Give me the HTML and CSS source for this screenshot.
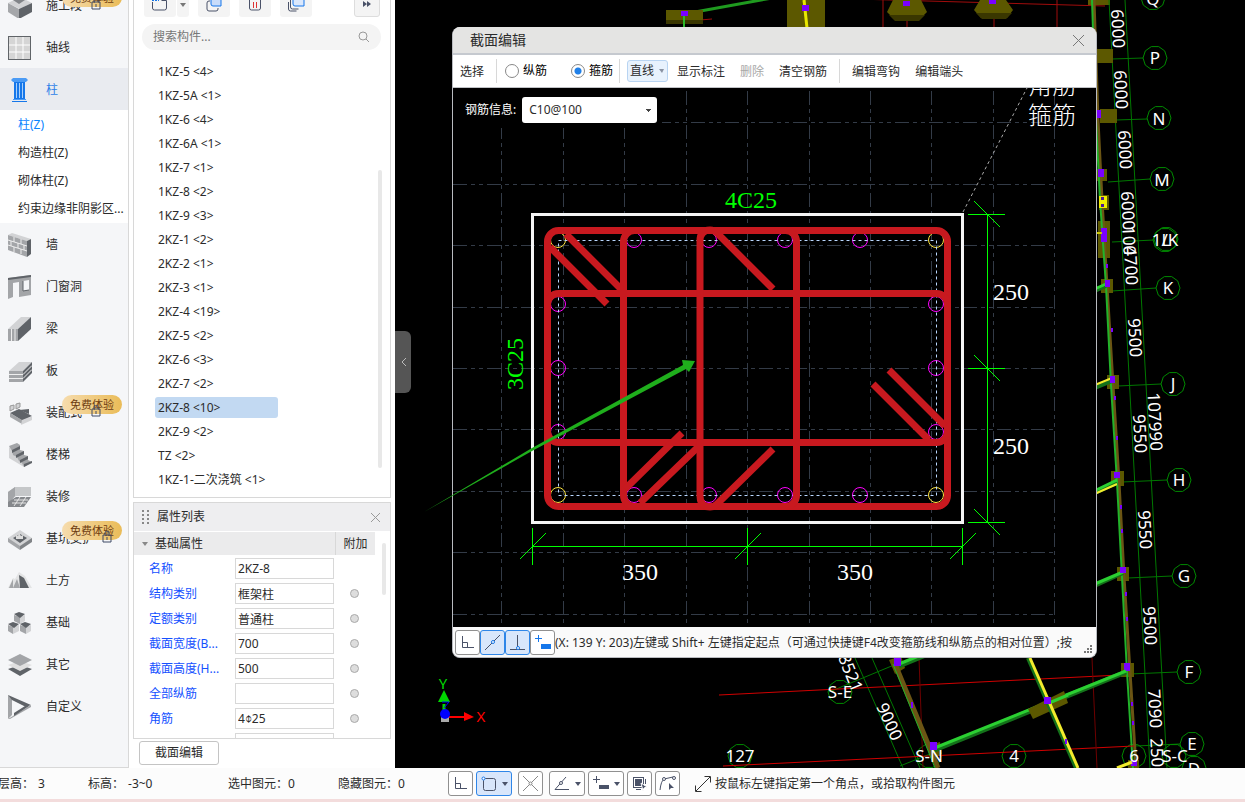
FILE: index.html
```html
<!DOCTYPE html>
<html lang="zh-CN">
<head>
    <meta charset="UTF-8">
    <meta name="viewport" content="width=device-width, initial-scale=1.0">
    <title>截面编辑</title>
    <link rel="stylesheet" href="styles.css">
</head>
<body>
    <div class="workspace">
        <nav class="modules">
            <div class="module-list">
                <button class="module">
                    <svg class="module-icon" viewBox="0 0 24 24"><path d="M0 9l12-6 12 6-12 6z" fill="#d2d3d5"/><path d="M0 9l11 6v10L0 18z" fill="#a5a7aa"/><path d="M24 9l-13 6v10l13-7z" fill="#5f6368"/><path d="M5 6l6 4 6-4V2H5z" fill="#818488"/></svg>
                    <span>施工段</span>
                    <span class="trial">免费体验</span>
                    <svg class="lock" viewBox="0 0 10 12"><path d="M3 4V2a2 2 0 0 1 4 0v2M1 4h8v7H1zM5 6v3" fill="none" stroke="#3f4a66"/></svg>
                </button>
                <button class="module">
                    <svg class="module-icon" viewBox="0 0 24 24"><path d="M0 0h23v24H0z" fill="#606468"/><path d="M1 1h21v22H1z" fill="#d5d5d5"/><path d="M8 1v22M15 1v22M1 9h21M1 16h21" stroke="#fff"/></svg>
                    <span>轴线</span>
                </button>
                <button class="module active">
                    <svg class="module-icon" viewBox="0 0 24 24"><path d="M5 0h13l2 2-2 2H5L3 2z" fill="#4b9bf5"/><path d="M6 4h11v17H6z" fill="#1677ea"/><path d="M8.500 5v15M11.500 5v15M14.500 5v15" stroke="#a8d0fb"/><path d="M5 21h13v1H5z" fill="#4b9bf5"/><path d="M4 23h15v1H4z" fill="#1677ea"/></svg>
                    <span>柱</span>
                </button>
                <ul class="submenu">
                    <li><a class="current" href="#">柱(Z)</a></li>
                    <li><a href="#">构造柱(Z)</a></li>
                    <li><a href="#">砌体柱(Z)</a></li>
                    <li><a href="#">约束边缘非阴影区...</a></li>
                </ul>
                <button class="module">
                    <svg class="module-icon" viewBox="0 0 24 24"><path d="M0 2l4-2 19 6-4 2z" fill="#d2d3d5"/><path d="M0 2l19 6v16L0 17z" fill="#a3a5a8"/><path d="M19 8l4-2v15l-4 3z" fill="#5f6368"/><path d="M0 7l19 6M0 12l19 6M6 4v5M13 6v5M3 8v5M10 10v5M16 12v5M6 14v5M13 16v5" stroke="#eee"/></svg>
                    <span>墙</span>
                </button>
                <button class="module">
                    <svg class="module-icon" viewBox="0 0 24 24"><path d="M0 3l23-3v20l-12 2V7l-6 1v14l-5 2z" fill="#a3a5a8"/><path d="M0 3l23-3v2L0 5z" fill="#5f6368"/><path d="M15 6l6-1v10l-6 1z" fill="#f5f6f8"/><path d="M15 6v10l6-1" fill="none" stroke="#5f6368"/></svg>
                    <span>门窗洞</span>
                </button>
                <button class="module">
                    <svg class="module-icon" viewBox="0 0 24 24"><path d="M0 12L13 0h10L10 12z" fill="#d2d3d5"/><path d="M0 12h10v12H0z" fill="#a3a5a8"/><path d="M10 12L23 0v12L10 24z" fill="#5f6368"/><path d="M3.500 12v12M7 12v12" stroke="#eee"/></svg>
                    <span>梁</span>
                </button>
                <button class="module">
                    <svg class="module-icon" viewBox="0 0 24 24"><path d="M1 12L11 3h13L15 12z" fill="#d2d3d5"/><path d="M1 12h14v11H1z" fill="#a3a5a8"/><path d="M15 12l9-9v11l-9 9z" fill="#5f6368"/><path d="M1 15.500h14l9-9M1 19.500h14l9-9" fill="none" stroke="#eee"/></svg>
                    <span>板</span>
                </button>
                <button class="module">
                    <svg class="module-icon" viewBox="0 0 24 24"><path d="M2 12l9-4 13 7-9 5z" fill="#5f6368"/><path d="M2 12v4l12 7v-4z" fill="#a3a5a8"/><path d="M14 19l10-4v4l-11 5z" fill="#d2d3d5"/><path d="M2 5l4-1v4l-4 2zM8 3l4-1v4l-4 2z" fill="#d2d3d5" stroke="#999"/><path d="M11 9l10-1v5z" fill="#5f6368"/></svg>
                    <span>装配式</span>
                    <span class="trial">免费体验</span>
                    <svg class="lock" viewBox="0 0 10 12"><path d="M3 4V2a2 2 0 0 1 4 0v2M1 4h8v7H1zM5 6v3" fill="none" stroke="#3f4a66"/></svg>
                </button>
                <button class="module">
                    <svg class="module-icon" viewBox="0 0 24 24"><path d="M1 4v11l15 9V14z" fill="#d2d3d5"/><path d="M1 3l8-3 3 2v5l4 1v4l4 1v4l4 2-8 5-2-4-3-2-2-4-4-2-1-4z" fill="#a3a5a8"/><path d="M4 7l8-4v3l-8 4zM8 12l8-4v3l-8 4zM12 17l8-4v3l-8 4zM16 21l8-3v2l-8 4z" fill="#5f6368"/></svg>
                    <span>楼梯</span>
                </button>
                <button class="module">
                    <svg class="module-icon" viewBox="0 0 24 24"><path d="M0 7l7-5h16v9H8l-8 5z" fill="#c5c7c9"/><path d="M0 7l7-5v9l-7 9z" fill="#a3a5a8"/><path d="M0 17l8-5h15l-7 10H0z" fill="#85888c"/><path d="M6 15h14M4 18h14M12 12l-6 9M18 12l-6 9" stroke="#e6e6e6"/></svg>
                    <span>装修</span>
                </button>
                <button class="module">
                    <svg class="module-icon" viewBox="0 0 24 24"><path d="M0 11l12-8 12 8v2l-12 9L0 13z" fill="#d2d3d5"/><path d="M0 11l12 8v4L0 15z" fill="#a3a5a8"/><path d="M24 11l-12 8v4l12-8z" fill="#808387"/><path d="M5 11l7-4 7 4-7 5z" fill="#5f6368"/><path d="M8 12V8l2 1 1-3 2 3 2-1v4z" fill="#ddd"/></svg>
                    <span>基坑支护</span>
                    <span class="trial">免费体验</span>
                    <svg class="lock lock-far" viewBox="0 0 10 12"><path d="M3 4V2a2 2 0 0 1 4 0v2M1 4h8v7H1zM5 6v3" fill="none" stroke="#3f4a66"/></svg>
                </button>
                <button class="module">
                    <svg class="module-icon" viewBox="0 0 24 24"><path d="M0 19l5-10 2 1 4-7 6 4 7 12z" fill="#e3e4e5"/><path d="M5 19l4-9 3 9zM1 19l4-9v9z" fill="#a3a5a8"/><path d="M11 6l5 3 5 10h-9z" fill="#5f6368"/></svg>
                    <span>土方</span>
                </button>
                <button class="module">
                    <svg class="module-icon" viewBox="0 0 24 24"><path d="M6 4v6l6 3V6zM0 14v6l5 3v-7zM12 14v6l6 3v-7z" fill="#a3a5a8"/><path d="M12 6v7l5-3V4zM5 16v7l6-3v-6zM18 16v7l5-3v-6z" fill="#d2d3d5"/><path d="M6 3l5-2 6 2-5 4zM0 13l5-2 6 2-5 4zM12 13l5-2 6 2-5 4z" fill="#5f6368"/></svg>
                    <span>基础</span>
                </button>
                <button class="module">
                    <svg class="module-icon" viewBox="0 0 24 24"><path d="M0 16l12-4 12 4-12 7z" fill="#5f6368"/><path d="M0 12l12-4 12 4-12 6z" fill="#e0e0e0"/><path d="M0 7l12-6 12 6-12 6z" fill="#a3a5a8"/></svg>
                    <span>其它</span>
                </button>
                <button class="module">
                    <svg class="module-icon" viewBox="0 0 24 24"><path d="M0 0l4 3v17l-4 4z" fill="#a3a5a8"/><path d="M0 0l23 10-5 2L4 5z" fill="#5f6368"/><path d="M0 24l23-14v2L2 24z" fill="#a3a5a8"/><path d="M6 18l11-7 4 0-15 10z" fill="#5f6368"/></svg>
                    <span>自定义</span>
                </button>
            </div>
        </nav>

        <aside class="side">
            <section class="components">
                <div class="component-tools">
                    <button class="tool-new" aria-label="新建"><svg width="20" height="16" viewBox="0 0 20 16"><path d="M2.500 5v6a2 2 0 0 0 2 2h10a2 2 0 0 0 2-2V3.500h-5" fill="none" stroke="#4a5268"/><path d="M2 3h7" stroke="#1677ea" stroke-dasharray="2 1" stroke-width="2"/></svg></button>
                    <button class="tool-arrow" aria-label="更多新建"><svg width="6" height="4"><path d="M0 0h6L3 4z" fill="#777"/></svg></button>
                    <button class="tool" aria-label="复制"><svg width="20" height="16" viewBox="0 0 20 16"><path d="M6 4H5a2 2 0 0 0-2 2v6a2 2 0 0 0 2 2h7a2 2 0 0 0 2-2v-1" fill="none" stroke="#4a5268"/><path d="M7 0h10v9H9a2 2 0 0 1-2-2z" fill="#c8dcfa" stroke="#1677ea"/></svg></button>
                    <button class="tool" aria-label="删除"><svg width="20" height="16" viewBox="0 0 20 16"><path d="M4.500 0v11a2 2 0 0 0 2 2h7a2 2 0 0 0 2-2V0" fill="none" stroke="#4a5268"/><path d="M8.500 5v6M11.500 5v6" stroke="#d33"/></svg></button>
                    <button class="tool" aria-label="层间复制"><svg width="20" height="16" viewBox="0 0 20 16"><path d="M2.500 5v7a2 2 0 0 0 2 2h6M4.500 3v7a2 2 0 0 0 2 2h6" fill="none" stroke="#4a5268"/><path d="M7 0h11v9H9a2 2 0 0 1-2-2z" fill="#dbe8fc" stroke="#1677ea"/></svg></button>
                    <button class="tool-more" aria-label="展开"><svg width="8" height="6"><path d="M0 0l4 3-4 3zM4 0l4 3-4 3z" fill="#4a5268"/></svg></button>
                </div>
                <label class="search">
                    <input type="text" placeholder="搜索构件..." aria-label="搜索构件">
                    <svg width="12" height="12" viewBox="0 0 12 12"><circle cx="5" cy="5" r="4" fill="none" stroke="#999"/><path d="M8 8l3 3" stroke="#999"/></svg>
                </label>
                <ul class="component-list">
                    <li>1KZ-5 &lt;4&gt;</li>
                    <li>1KZ-5A &lt;1&gt;</li>
                    <li>1KZ-6 &lt;4&gt;</li>
                    <li>1KZ-6A &lt;1&gt;</li>
                    <li>1KZ-7 &lt;1&gt;</li>
                    <li>1KZ-8 &lt;2&gt;</li>
                    <li>1KZ-9 &lt;3&gt;</li>
                    <li>2KZ-1 &lt;2&gt;</li>
                    <li>2KZ-2 &lt;1&gt;</li>
                    <li>2KZ-3 &lt;1&gt;</li>
                    <li>2KZ-4 &lt;19&gt;</li>
                    <li>2KZ-5 &lt;2&gt;</li>
                    <li>2KZ-6 &lt;3&gt;</li>
                    <li>2KZ-7 &lt;2&gt;</li>
                    <li class="selected"><span>2KZ-8 &lt;10&gt;</span></li>
                    <li>2KZ-9 &lt;2&gt;</li>
                    <li>TZ &lt;2&gt;</li>
                    <li>1KZ-1-二次浇筑 &lt;1&gt;</li>
                </ul>
                <div class="list-scroll"></div>
            </section>

            <section class="properties">
                <header class="properties-title">
                    <svg width="7" height="15" viewBox="0 0 7 15"><path d="M1 0v15M6 0v15" stroke="#888" stroke-width="2" stroke-dasharray="2 2"/></svg>
                    <h2>属性列表</h2>
                    <button class="close" aria-label="关闭"><svg width="9" height="9"><path d="M0 0l9 9M9 0L0 9" stroke="#999"/></svg></button>
                </header>
                <div class="properties-head">
                    <span class="group"><svg width="6" height="4"><path d="M0 0h6L3 4z" fill="#888"/></svg>基础属性</span>
                    <span class="extra">附加</span>
                </div>
                <div class="prop"><label for="pName">名称</label><input type="text" id="pName" value="2KZ-8"></div>
                <div class="prop"><label for="pType">结构类别</label><input type="text" id="pType" value="框架柱"><input type="checkbox" aria-label="附加 结构类别"></div>
                <div class="prop"><label for="pQuota">定额类别</label><input type="text" id="pQuota" value="普通柱"><input type="checkbox" aria-label="附加 定额类别"></div>
                <div class="prop"><label for="pWidth">截面宽度(B...</label><input type="text" id="pWidth" value="700"><input type="checkbox" aria-label="附加 截面宽度"></div>
                <div class="prop"><label for="pHeight">截面高度(H...</label><input type="text" id="pHeight" value="500"><input type="checkbox" aria-label="附加 截面高度"></div>
                <div class="prop"><label for="pAll">全部纵筋</label><input type="text" id="pAll" value=""><input type="checkbox" aria-label="附加 全部纵筋"></div>
                <div class="prop"><label for="pCorner">角筋</label><input type="text" id="pCorner" value="4⌽25"><input type="checkbox" aria-label="附加 角筋"></div>
                <div class="prop"><label></label><input type="text" aria-label="B边一侧中部筋"></div>
                <div class="props-scroll"></div>
            </section>
            <button class="section-edit">截面编辑</button>
        </aside>

        <main class="viewport">
            <svg class="scene" viewBox="395 0 850 768" preserveAspectRatio="xMinYMin slice">
                <defs>
                    <polygon id="ring" points="12,0 9.700,7.100 3.700,11.400 -3.700,11.400 -9.700,7.100 -12,0 -9.700,-7.100 -3.700,-11.400 3.700,-11.400 9.700,-7.100"/>
                </defs>
                <!-- top row of footings -->
                <g stroke="#a00c0c">
                    <path d="M820 -2L1105 6M883 0v30M907 0v30M994 0v30M1057 0v30M700 20l12-1"/>
                </g>
                <path d="M684 14l110-20" stroke="#1f9a1f" stroke-width="3"/>
                <path d="M666 10h37v14h-37zM787 0h38v28h-38zM893 0h28l6 12-8 8h-24l-8-8zM980 0h26l7 10-6 8h-26l-7-8zM1088 0h22v5h-22z" fill="#5c5800"/>
                <path d="M666 20h37v4h-37zM889 15h36l-6 6h-24zM976 13h36l-6 6h-24z" fill="#3a3700"/>
                <path d="M684 16v12" stroke="#2ab82a" stroke-width="2"/>
                <path d="M804 0l3 28" stroke="#e8e800" stroke-width="3"/>
                <path d="M681 11h7v5h-7zM802 5h7v6h-7zM903 1h7v5h-7zM989 0h7v4h-7z" fill="#7a00ff"/>

                <!-- axis lines -->
                <g class="axis">
                    <path d="M1109 0L1150 768M1125 0L1167 768M855 658L903 768M872 658L920 768"/>
                    <path d="M1112 59l31-1M1116 120l31-1M1108 182l42-3M1112 242l42-2M1112 291l44-3M1118 386l43-2M1122 482l45-2M1128 578l44-2M1130 674l47-2M1135 746l45-2M829 692l65-27M900 766l30-12"/>
                </g>
                <g class="axis-ring">
                    <use href="#ring" x="1153" y="-2"/><use href="#ring" x="1155" y="58"/><use href="#ring" x="1159" y="118"/><use href="#ring" x="1162" y="179"/><use href="#ring" x="1165" y="240"/><use href="#ring" x="1166" y="239"/><use href="#ring" x="1168" y="288"/><use href="#ring" x="1173" y="384"/><use href="#ring" x="1179" y="480"/><use href="#ring" x="1184" y="576"/><use href="#ring" x="1189" y="672"/><use href="#ring" x="1192" y="744"/><use href="#ring" x="1194" y="768"/><use href="#ring" x="1174" y="756"/><use href="#ring" x="1134" y="756"/><use href="#ring" x="1014" y="756"/><use href="#ring" x="929" y="756"/><use href="#ring" x="840" y="692"/><use href="#ring" x="740" y="756"/>
                </g>

                <!-- columns on the right -->
                <path d="M1097 49h16v14h-16zM1100 109h17v14h-17zM1097 169h10v12h-10zM1099 195h10v15h-10zM1098 221h12v37h-12zM1101 279h12v14h-12zM1107 375h12v14h-12zM1111 471h13v15h-13zM1117 567h12v14h-12zM1121 663h13v14h-13zM1128 760h11v8h-11z" fill="#5c5800"/>
                <path d="M1094 0L1098 120 1102 200 1107 286 1113 385 1119 482 1124 577 1130 672 1136 768" fill="none" stroke="#6b5514" stroke-width="3"/>
                <path d="M1092 0L1096 120 1100 200 1106 286 1111 385 1117 482 1122 577 1127 672 1133 768" fill="none" stroke="#22b32a" stroke-width="2"/>
                <g fill="none">
                    <path d="M1090 293l16-7M1090 390l22-9M1090 495l27-12M1090 588l33-15" stroke="#14711a" stroke-width="4"/>
                    <path d="M1090 291l16-7M1090 493l27-13M1090 586l33-14" stroke="#2bd032" stroke-width="3"/>
                    <path d="M1090 387l22-9M1090 496l27-12" stroke="#f2ec2d" stroke-width="2"/>
                </g>
                <path d="M1097 110h4v8h-4zM1098 169h6v8h-6zM1101 228h6v14h-6zM1105 280h5v7h-5zM1110 376h5v7h-5zM1114 472h6v6h-6zM1120 567h6v6h-6zM1124 663h6v8h-6zM1131 760h6v6h-6zM1106 264h2v4h-2zM1111 328h2v4h-2zM1114 396h2v4h-2zM1116 436h2v4h-2zM1120 505h2v4h-2zM1121 529h2v4h-2zM1125 592h2v4h-2zM1126 617h2v4h-2zM1131 702h2v4h-2zM1132 721h2v4h-2z" fill="#7a00ff"/>
                <path d="M1099 196h8v12h-8z" fill="#f0ee00"/>
                <path d="M1101 197h3v3h-3zM1101 204h3v3h-3z" fill="#4d1a9a"/>
                <path d="M1097 233h5" stroke="#c9c400" stroke-width="2"/>

                <!-- lower wing -->
                <path d="M719 695L1120 675M723 766L1134 746" stroke="#d00000"/>
                <path d="M919 658l4 110M1092 658l5 110" stroke="#6e0000"/>
                <path d="M889 660l12-4 4 12-10 6zM926 746l14-4 2 12-10 5z" fill="#5c5800"/>
                <path d="M895 664L938 768" stroke="#6b5514" stroke-width="5"/>
                <path d="M893 664L935 768" stroke="#22b32a"/>
                <path d="M899 666l34-14M932 751L1126 672" stroke="#14711a" stroke-width="5"/>
                <path d="M899 664l34-14M932 749L1126 671" stroke="#2bd032" stroke-width="3"/>
                <path d="M1028 709l36-18 4 12-35 16z" fill="#5c5800"/>
                <path d="M1049 703l19-8" stroke="#2bd032" stroke-width="3"/>
                <path d="M1028 658L1076 768" stroke="#14711a" stroke-width="4"/>
                <path d="M1030 658L1078 768" stroke="#f2ec2d" stroke-width="3"/>
                <path d="M1117 768l15-6" stroke="#f2ec2d" stroke-width="3"/>
                <path d="M894 658h7v8h-7zM930 742h7v8h-7zM1044 697h7v7h-7zM911 702h2v6h-2zM1065 739h2v5h-2z" fill="#7a00ff"/>

                <g class="axis-name">
                    <text x="1153" y="5">Q</text><text x="1155" y="64">P</text><text x="1159" y="125">N</text><text x="1162" y="186">M</text><text x="1165" y="246">1/K</text><text x="1166" y="246">L</text><text x="1168" y="294">K</text><text x="1173" y="390">J</text><text x="1179" y="486">H</text><text x="1184" y="582">G</text><text x="1189" y="678">F</text><text x="1192" y="750">E</text><text x="1194" y="775">D</text><text x="1175" y="762">S-C</text><text x="1134" y="762">6</text><text x="1014" y="762">4</text><text x="929" y="762">S-N</text><text x="840" y="698">S-E</text><text x="740" y="762">127</text>
                </g>
                <g class="axis-name">
                    <text transform="translate(1112 29) rotate(87)">6000</text>
                    <text transform="translate(1115 90) rotate(87)">6000</text>
                    <text transform="translate(1119 150) rotate(87)">6000</text>
                    <text transform="translate(1122 211) rotate(87)">6000</text>
                    <text transform="translate(1123 241) rotate(87)">100</text>
                    <text transform="translate(1125 266) rotate(87)">4700</text>
                    <text transform="translate(1129 338) rotate(87)">9500</text>
                    <text transform="translate(1134 434) rotate(87)">9550</text>
                    <text transform="translate(1149 422) rotate(87)">107990</text>
                    <text transform="translate(1139 530) rotate(87)">9550</text>
                    <text transform="translate(1144 626) rotate(87)">9500</text>
                    <text transform="translate(1149 709) rotate(87)">7090</text>
                    <text transform="translate(1151 753) rotate(87)">250</text>
                    <text transform="translate(845 675) rotate(68)">8521</text>
                    <text transform="translate(884 724) rotate(66)">9000</text>
                </g>

                <!-- coordinate gizmo -->
                <path d="M444 704v8" stroke="#00d800" stroke-width="3"/>
                <path d="M444 690l6 12h-12z" fill="#00d800"/>
                <path d="M441 717h8v5h-8z" fill="#aaa"/>
                <path d="M449 716h15v-4l10 5-10 4v-3h-15z" fill="#f00"/>
                <circle cx="445" cy="714" r="5" fill="#00f"/>
                <path d="M442 702h7l-5 6" fill="none" stroke="#00f"/>
                <text class="gizmo-y" x="443" y="689">Y</text>
                <text class="gizmo-x" x="481" y="722">X</text>
            </svg>

            <button class="collapse" aria-label="收起"><svg width="5" height="8"><path d="M5 0L1 4l4 4" fill="none" stroke="#bbb"/></svg></button>

            <section class="dialog">
                <header class="dialog-title">
                    <h1>截面编辑</h1>
                    <button class="close" aria-label="关闭"><svg width="11" height="11"><path d="M0 0l11 11M11 0L0 11" stroke="#777"/></svg></button>
                </header>
                <div class="dialog-tools">
                    <button class="cmd pick">选择</button>
                    <i class="sep"></i>
                    <label class="choice choice-first"><input type="radio" name="bar">纵筋</label>
                    <label class="choice"><input type="radio" name="bar" checked>箍筋</label>
                    <i class="sep sep-near"></i>
                    <button class="cmd shape">直线<svg width="5" height="4"><path d="M0 0h5L3 4z" fill="#8a93a3"/></svg></button>
                    <button class="cmd">显示标注</button>
                    <button class="cmd" disabled>删除</button>
                    <button class="cmd">清空钢筋</button>
                    <i class="sep"></i>
                    <button class="cmd">编辑弯钩</button>
                    <button class="cmd">编辑端头</button>
                </div>
                <div class="canvas">
                    <svg class="drawing" viewBox="453 88 643 539" preserveAspectRatio="xMinYMin slice">
                        <g class="grid">
                            <path d="M501.500 91v540M563.500 91v540M624.500 91v540M686.500 91v540M747.500 91v540M809.500 91v540M870.500 91v540M931.500 91v540M993.500 91v540M1054.500 91v540"/>
                            <path d="M453 122.500h602M453 184.500h602M453 245.500h602M453 307.500h602M453 368.500h602M453 429.500h602M453 491.500h602M453 552.500h602M453 614.500h602"/>
                        </g>
                        <path d="M453 88h209v40H453z"/>
                        <path d="M963 212L1027 88" stroke="#aaa" stroke-dasharray="3 3"/>
                        <rect class="concrete" x="532.500" y="214.500" width="430" height="308"/>

                        <g class="bar">
                            <circle cx="634" cy="240" r="7.500"/><circle cx="709" cy="240" r="7.500"/><circle cx="785" cy="240" r="7.500"/><circle cx="860" cy="240" r="7.500"/>
                            <circle cx="634" cy="495" r="7.500"/><circle cx="709" cy="495" r="7.500"/><circle cx="785" cy="495" r="7.500"/><circle cx="860" cy="495" r="7.500"/>
                            <circle cx="558" cy="304" r="7.500"/><circle cx="558" cy="368" r="7.500"/><circle cx="558" cy="432" r="7.500"/>
                            <circle cx="936" cy="304" r="7.500"/><circle cx="936" cy="368" r="7.500"/><circle cx="936" cy="432" r="7.500"/>
                        </g>
                        <g class="bar corner">
                            <circle cx="558" cy="240" r="7.500"/><circle cx="936" cy="240" r="7.500"/><circle cx="558" cy="495" r="7.500"/><circle cx="936" cy="495" r="7.500"/>
                        </g>
                        <rect class="guide" x="558.500" y="240.500" width="378" height="255"/>

                        <g class="stirrup">
                            <rect x="547.500" y="230.500" width="400" height="276" rx="11"/>
                            <rect x="623.500" y="230.500" width="173" height="276" rx="11"/>
                            <rect x="547.500" y="293.500" width="400" height="149" rx="11"/>
                            <path d="M773 289L717 233q-3-3-7-3-10 0-10 11v255q0 11 10 11 4 0 7-3L773 449"/>
                            <path d="M566 234l56 56M550 247l57 57M625 489l57-56M640 503l58-56M889 370l56 56M873 384l56 56"/>
                        </g>

                        <g class="dim">
                            <path d="M532.500 546.500h430M532.500 528v37M747.500 528v37M962.500 528v37"/>
                            <path d="M520 559l26-26M735 559l26-26M950 559l26-26"/>
                            <path d="M987.500 214.500v308M968 214.500h37M968 368.500h37M968 522.500h37"/>
                            <path d="M974 201l26 26M974 355l26 26M974 509l26 26"/>
                        </g>
                        <g class="dim-text">
                            <text x="640" y="580">350</text>
                            <text x="855" y="580">350</text>
                            <text x="1011" y="300">250</text>
                            <text x="1011" y="454">250</text>
                            <text class="steel" x="751" y="208">4C25</text>
                            <text class="steel" transform="translate(523 364) rotate(-90)">3C25</text>
                            <text class="legend" x="1052" y="94">角筋</text>
                            <text class="legend" x="1052" y="124">箍筋</text>
                        </g>
                    </svg>
                    <div class="rebar-info">
                        <label for="rebar">钢筋信息:</label>
                        <select id="rebar"><option>C10@100</option></select>
                    </div>
                </div>
                <footer class="dialog-status">
                    <button class="snap" aria-label="正交"><svg width="15" height="15"><path d="M2.500 1v11.500H14M2.500 7.500h5v5" fill="none" stroke="#4a5268"/></svg></button>
                    <button class="snap on" aria-label="延伸"><svg width="15" height="15"><path d="M0 15L15 0" stroke="#4a5268"/><circle cx="8" cy="7" r="1.500" fill="#fff" stroke="#1677ea"/></svg></button>
                    <button class="snap on" aria-label="垂点"><svg width="15" height="15"><path d="M7.500 0v14M0 14.500h15" stroke="#4a5268"/><circle cx="8" cy="13" r="1.500" fill="#fff" stroke="#1677ea"/></svg></button>
                    <button class="snap" aria-label="动态输入"><svg width="16" height="15"><path d="M3.500 0v7M0 3.500h7" stroke="#1677ea"/><path d="M6 9h10v5H6z" fill="#1677ea"/></svg></button>
                    <p class="hint">(X: 139 Y: 203)左键或 Shift+ 左键指定起点（可通过快捷键F4改变箍筋线和纵筋点的相对位置）;按</p>
                    <svg class="grip" width="8" height="8"><path d="M6 0h2v2H6zM3 3h2v2H3zM6 3h2v2H6zM0 6h2v2H0zM3 6h2v2H3zM6 6h2v2H6z" fill="#777"/></svg>
                </footer>
            </section>

            <svg class="pointer" viewBox="420 355 280 160"><path d="M424 512L532 448 683 365 682 360 695 361 689 372 686 369 532 451z" fill="#1fae1c"/></svg>
        </main>
    </div>

    <footer class="statusbar">
        <dl class="facts">
            <div class="fact-floor"><dt>层高：</dt><dd>3</dd></div>
            <div class="fact-level"><dt>标高：</dt><dd>-3~0</dd></div>
            <div class="fact-picked"><dt>选中图元：</dt><dd>0</dd></div>
            <div class="fact-hidden"><dt>隐藏图元：</dt><dd>0</dd></div>
        </dl>
        <div class="modes">
            <button class="mode" aria-label="正交"><svg width="15" height="15"><path d="M2.500 1v11.500H14M2.500 7.500h5v5" fill="none" stroke="#4a5268"/></svg></button>
            <button class="mode wide on" aria-label="矩形选择"><svg width="16" height="16"><rect x="2.500" y="2.500" width="12" height="12" rx="2" fill="none" stroke="#4a5268"/><circle cx="2.500" cy="2.500" r="1.500" fill="#fff" stroke="#1677ea"/></svg><svg width="6" height="4"><path d="M0 0h6L3 4z" fill="#4a5268"/></svg></button>
            <button class="mode" aria-label="交点"><svg width="15" height="15"><path d="M0 0l15 15M15 0L0 15" stroke="#888"/><circle cx="7.500" cy="7.500" r="1.500" fill="#fff" stroke="#888"/></svg></button>
            <button class="mode wide" aria-label="角度"><svg width="16" height="15"><path d="M12 1L1 13.500h14" fill="none" stroke="#4a5268"/><circle cx="7" cy="7" r="1.500" fill="#fff" stroke="#4a5268"/></svg><svg width="6" height="4"><path d="M0 0h6L3 4z" fill="#4a5268"/></svg></button>
            <button class="mode wide" aria-label="动态输入"><svg width="16" height="15"><path d="M3.500 0v7M0 3.500h7" stroke="#4a5268"/><path d="M6 9h10v4H6z" fill="#4a5268"/></svg><svg width="6" height="4"><path d="M0 0h6L3 4z" fill="#4a5268"/></svg></button>
            <button class="mode" aria-label="框选"><svg width="15" height="15"><rect x="1.500" y="1.500" width="10" height="10" fill="none" stroke="#4a5268"/><path d="M3 3h7v7H3z" fill="#4a5268"/><path d="M4 13.500h5M13.500 3v5" stroke="#4a5268"/><path d="M9 7l6 4-3 1-1 3z" fill="#4a5268" stroke="#fff"/></svg></button>
            <button class="mode" aria-label="折线"><svg width="17" height="15"><path d="M1 14q1-9 4-11l9-2" fill="none" stroke="#4a5268"/><circle cx="5" cy="3" r="1.500" fill="#fff" stroke="#4a5268"/><circle cx="15" cy="2" r="1.500" fill="#fff" stroke="#4a5268"/><path d="M10 7l5 5-3 0-2 2z" fill="#4a5268"/></svg></button>
        </div>
        <svg class="expand" width="16" height="16"><path d="M1 15L15 1M9.500 .5h6v6M.5 9.500v6h6" fill="none" stroke="#333"/></svg>
        <p>按鼠标左键指定第一个角点，或拾取构件图元</p>
    </footer>
</body>
</html>
```
FILE: styles.css
```css
* {
    box-sizing: border-box;
}

body {
    margin: 0;
    height: 100vh;
    display: flex;
    flex-direction: column;
    overflow: hidden;
    background: #fff;
    color: #2b2b2b;
    font-family: "Noto Sans", "Noto Sans CJK SC", sans-serif;
    font-size: 12px;
    line-height: 20px;
}

h1, h2, p, ul, dl, dd {
    margin: 0;
    padding: 0;
    font-weight: normal;
}

ul {
    list-style: none;
}

a {
    color: inherit;
    text-decoration: none;
}

button, input, select {
    margin: 0;
    padding: 0;
    border: 0;
    background: none;
    color: inherit;
    font: inherit;
}

svg {
    flex: none;
}

.workspace {
    flex: 1;
    display: flex;
    min-height: 0;
}

/* module navigation */
.modules {
    width: 129px;
    margin-right: 4px;
    overflow: hidden;
    background: #f5f6f8;
    border-right: 1px solid #d8d8d8;
    border-bottom: 1px solid #d8d8d8;
}

.module-list {
    margin-top: -16px;
}

.module {
    position: relative;
    display: flex;
    align-items: center;
    gap: 14px;
    width: 100%;
    height: 42px;
    padding: 1px 0 0 8px;
}

.module.active {
    background: #e9ebf0;
    color: #2f7fe8;
}

.module-icon {
    width: 24px;
    height: 24px;
}

.submenu {
    padding-top: 1px;
    background: #fff;
    line-height: 28px;
    white-space: nowrap;
}

.submenu a {
    display: block;
    padding-left: 18px;
}

.submenu .current {
    color: #0a84ff;
}

.trial {
    position: absolute;
    left: 62px;
    top: 4px;
    width: 60px;
    height: 19px;
    border-radius: 10px;
    background: linear-gradient(90deg, #f6dcae, #eabc58);
    color: #6e3c10;
    font-size: 11px;
    line-height: 20px;
}

.lock {
    position: absolute;
    left: 91px;
    top: 14px;
    width: 10px;
    height: 12px;
}

.lock-far {
    left: 102px;
}

/* component list and properties */
.side {
    width: 258px;
    margin-right: 4px;
    display: flex;
    flex-direction: column;
    align-items: stretch;
}

.components {
    position: relative;
    flex: 1;
    min-height: 0;
    overflow: hidden;
    border: 1px solid #d8d8d8;
    border-top: 0;
}

.component-tools {
    display: flex;
    height: 28px;
    margin: -11px 10px 7px;
}

.component-tools button {
    display: flex;
    align-items: flex-end;
    justify-content: center;
    padding-bottom: 4px;
    border-radius: 3px;
    background: #f4f4f4;
}

.component-tools .tool-new, .component-tools .tool {
    width: 32px;
}

.component-tools .tool-arrow {
    width: 12px;
    margin-left: 1px;
    padding-bottom: 10px;
}

.component-tools .tool {
    margin-left: 9px;
}

.component-tools .tool-more {
    width: 26px;
    margin-left: auto;
    padding-bottom: 9px;
    border: 1px solid #ddd;
}

.search {
    display: flex;
    align-items: center;
    height: 26px;
    margin: 0 9px 10px 8px;
    padding: 0 11px;
    border-radius: 13px;
    background: #f4f4f4;
}

.search input {
    flex: 1;
    min-width: 0;
    outline: none;
}

.search input::placeholder {
    color: #777;
}

.component-list {
    line-height: 24px;
    padding-left: 24px;
}

.component-list .selected span {
    display: block;
    width: 123px;
    height: 21px;
    margin: 1px 0 2px -3px;
    padding-left: 3px;
    border-radius: 3px;
    background: #c2d9f2;
    line-height: 21px;
}

.component-list .selected {
    display: flex;
}

.list-scroll, .props-scroll {
    position: absolute;
    right: 8px;
    top: 170px;
    width: 4px;
    height: 298px;
    border-radius: 2px;
    background: #e8e8e8;
}

.properties {
    position: relative;
    height: 237px;
    margin-top: 4px;
    overflow: hidden;
    border: 1px solid #d8d8d8;
}

.properties-title {
    display: flex;
    align-items: center;
    gap: 8px;
    height: 28px;
    padding: 0 10px 0 8px;
    background: #eeeef0;
}

.properties-title h2 {
    flex: 1;
    font-size: 12px;
}

.close {
    display: flex;
}

.properties-head {
    display: flex;
    height: 23px;
    margin: 1px 15px 1px 0;
    background: #ebebec;
    line-height: 23px;
}

.group {
    flex: 1;
    display: flex;
    align-items: center;
    gap: 7px;
    padding-left: 8px;
}

.extra {
    width: 40px;
    border-left: 1px solid #d8d8d8;
    text-align: center;
}

.prop {
    display: grid;
    grid-template-columns: 86px 99px 41px;
    align-items: center;
    height: 25px;
    margin-left: 15px;
    color: #1450ff;
}

.prop input[type="text"] {
    height: 21px;
    padding-left: 2px;
    border: 1px solid #d8d8d8;
    color: #2b2b2b;
}

.prop input[type="checkbox"] {
    appearance: none;
    justify-self: center;
    width: 9px;
    height: 9px;
    border: 1px solid #aaa;
    border-radius: 50%;
    background: #ddd;
}

.props-scroll {
    right: 4px;
    top: 40px;
    height: 52px;
}

.section-edit {
    align-self: flex-start;
    width: 80px;
    height: 24px;
    margin: 2px 0 3px 6px;
    border: 1px solid #c4c4c4;
    border-radius: 3px;
}

/* model view */
.viewport {
    position: relative;
    flex: 1;
    min-width: 0;
    overflow: hidden;
    background: #000;
}

.scene {
    display: block;
    width: 100%;
    height: 100%;
}

.axis {
    fill: none;
    stroke: #007800;
}

.axis-ring {
    fill: none;
    stroke: #008a00;
}

.axis-name {
    fill: #fff;
    font-size: 17px;
    text-anchor: middle;
}

.gizmo-x, .gizmo-y {
    font-size: 15px;
    text-anchor: middle;
}

.gizmo-x {
    fill: #f00;
}

.gizmo-y {
    fill: #00d800;
}

.collapse {
    position: absolute;
    left: 0;
    top: 331px;
    width: 16px;
    height: 62px;
    border-radius: 0 6px 6px 0;
    background: #555;
}

.pointer {
    position: absolute;
    left: 25px;
    top: 355px;
    width: 280px;
    height: 160px;
    pointer-events: none;
}

/* section editor window */
.dialog {
    position: absolute;
    left: 57px;
    top: 27px;
    width: 645px;
    height: 631px;
    display: flex;
    flex-direction: column;
    overflow: hidden;
    border: 1px solid #b9bbc0;
    border-top: 0;
    border-radius: 8px;
    background: #fff;
}

.dialog-title {
    display: flex;
    align-items: center;
    justify-content: space-between;
    height: 28px;
    padding: 0 12px 0 17px;
    border-bottom: 2px solid #c5c9cf;
    background: #e4e4e3;
}

.dialog-title h1 {
    font-size: 14px;
}

.dialog-tools {
    display: flex;
    align-items: center;
    height: 33px;
    padding-left: 7px;
    border-bottom: 1px solid #c0c2c6;
}

.cmd {
    height: 22px;
    margin-right: 15px;
    padding-top: 2px;
    white-space: nowrap;
}

.cmd:disabled {
    color: #a8a8a8;
}

.pick {
    margin-right: 12px;
}

.sep {
    width: 1px;
    height: 24px;
    margin: 0 12px 0 -3px;
    background: #d8d8d8;
}

.pick + .sep {
    margin: 0 8px 0 0;
}

.sep-near {
    margin: 0 7px 0 6px;
}

.choice {
    display: flex;
    align-items: center;
    gap: 4px;
    color: #000;
}

.choice-first {
    margin-right: 24px;
}

.choice input {
    appearance: none;
    width: 14px;
    height: 14px;
    border: 1px solid #888;
    border-radius: 50%;
    background: #fff;
}

.choice input:checked {
    background: radial-gradient(#2080e8 0 3px, #fff 4px);
}

.shape {
    display: flex;
    align-items: center;
    gap: 5px;
    margin-right: 9px;
    padding: 0 3px 0 2px;
    border: 1px solid #b8d4f2;
    border-radius: 3px;
    background: #e8f2fd;
}

.canvas {
    position: relative;
    flex: 1;
    min-height: 0;
    background: #000;
}

.drawing {
    display: block;
    width: 100%;
    height: 100%;
}

.grid {
    fill: none;
    stroke: #333b47;
    stroke-dasharray: 14 4 4 4 4 4;
}

.concrete {
    fill: none;
    stroke: #f4f4f4;
    stroke-width: 3px;
}

.bar {
    fill: none;
    stroke: #f0f;
}

.corner {
    stroke: #ffe640;
}

.guide {
    fill: none;
    stroke: #b9d7ff;
    stroke-dasharray: 3 3;
}

.stirrup {
    fill: none;
    stroke: #c8191f;
    stroke-width: 7px;
}

.dim {
    fill: none;
    stroke: #0f0;
}

.dim-text {
    fill: #fff;
    font-family: "Liberation Serif", "Noto Sans CJK SC", serif;
    font-size: 24px;
    text-anchor: middle;
}

.steel {
    fill: #0f0;
}

.legend {
    font-weight: 300;
}

.rebar-info {
    position: absolute;
    left: 12px;
    top: 9px;
    display: flex;
    align-items: center;
    gap: 6px;
    color: #fff;
}

.rebar-info select {
    appearance: none;
    width: 135px;
    height: 26px;
    padding-left: 7px;
    border-radius: 3px;
    background: linear-gradient(#444, #444) 124px 12px / 5px 1px no-repeat, linear-gradient(#444, #444) 125px 13px / 3px 1px no-repeat, linear-gradient(#444, #444) 126px 14px / 1px 1px no-repeat, #fff;
    color: #2b2b2b;
}

.dialog-status {
    position: relative;
    display: flex;
    align-items: center;
    height: 30px;
    padding: 0 20px 0 2px;
    background: #fafafa;
}

.snap, .mode {
    display: flex;
    flex: none;
    align-items: center;
    justify-content: center;
    width: 25px;
    height: 25px;
    border: 1px solid #909090;
    border-radius: 3px;
    background: #fff;
}

.snap.on, .mode.on {
    border-color: #2f86e8;
    background: #d8e6fb;
}

.hint {
    flex: 1;
    min-width: 0;
    padding-top: 1px;
    overflow: hidden;
    white-space: nowrap;
}

.grip {
    position: absolute;
    right: 4px;
    bottom: 4px;
}

/* status bar */
.statusbar {
    display: flex;
    align-items: center;
    height: 34px;
    border-bottom: 3px solid #f3dcdc;
    background: #fcfcfc;
}

.facts {
    display: flex;
    width: 448px;
    white-space: nowrap;
}

.facts div {
    display: flex;
    gap: 4px;
}

.fact-floor {
    width: 90px;
    margin-left: -2px;
}

.fact-level {
    width: 140px;
}

.fact-picked {
    width: 110px;
}

.fact-picked, .fact-hidden {
    column-gap: 0;
}

.facts .fact-picked, .facts .fact-hidden {
    gap: 0;
}

.modes {
    display: flex;
    gap: 3px;
}

.mode:nth-child(3), .mode:nth-child(4) {
    margin-left: 3px;
}

.mode.wide {
    width: 36px;
    gap: 5px;
}

.expand {
    margin: 0 4px 0 15px;
}
```
